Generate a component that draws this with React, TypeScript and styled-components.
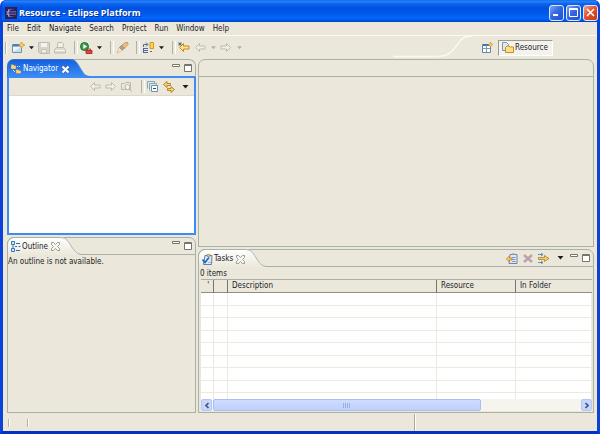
import React from "react";
import styled, { createGlobalStyle, css } from "styled-components";

const face = "#ebe8db";
const edge = "#a9b0a6";
const ink = "#1c1c28";
const focus = "#3b8cf6";

const Page = createGlobalStyle`
  * { box-sizing: border-box; }
  body { margin: 0; background: #fff; font: 8px/12px "DejaVu Sans Condensed", "DejaVu Sans", sans-serif; color: ${ink}; }
  button { font: inherit; color: inherit; padding: 0; border: 0; background: none; }
  svg { display: block; flex: none; }
`;

const Frame = styled.div`
  min-height: 100vh;
  display: flex;
  flex-direction: column;
  border: 3px solid #0a42dc;
  border-top: 0;
  border-bottom-color: #0530c4;
  border-radius: 6px 6px 0 0;
  background: #0a42dc;
`;
const TitleBar = styled.header`
  display: flex;
  align-items: center;
  height: 22px;
  gap: 2px;
  padding: 3px 0 0 3px;
  margin: 0 -1px;
  border-radius: 5px 5px 0 0;
  background: linear-gradient(#0a5be8 0, #2b86fa 1px, #0a62ee 4px, #0052e0 8px, #0058e8 13px, #0268fc 18px, #0058ea 20px, #0340c4 22px);
`;
const Title = styled.h1`
  flex: 1;
  margin: 0;
  color: #fff;
  font: bold 9px/14px "Open Sans", sans-serif;
  text-shadow: 1px 1px 0 #0a2f96;
`;
const CaptionButton = styled.button<{ $close?: boolean }>`
  display: grid;
  place-items: center;
  width: 15px;
  height: 16px;
  border: 1px solid #dfe9fb;
  border-radius: 3px;
  background: ${(p) =>
    p.$close
      ? "linear-gradient(135deg, #f0a087, #e2532c 45%, #c93a12)"
      : "linear-gradient(135deg, #7fa5f5, #3668e4 45%, #1c4fd8)"};
`;
const Client = styled.div`
  flex: 1;
  display: flex;
  flex-direction: column;
  background: ${face};
`;
const MenuBar = styled.nav`
  display: flex;
  gap: 8px;
  height: 14px;
  padding: 0 4px;
  border-bottom: 1px solid #fbfaf5;
`;
const MenuItem = styled.button`
  line-height: 13px;
`;
const ToolRow = styled.div`
  display: flex;
  align-items: stretch;
  height: 23px;
`;
const ToolBar = styled.div`
  display: flex;
  align-items: center;
  flex: 1;
  padding-left: 2px;
`;
const IconButton = styled.button<{ $w?: number }>`
  display: grid;
  place-items: center;
  flex: none;
  width: ${(p) => p.$w ?? 16}px;
  height: 16px;
`;
const Grip = styled.span`
  width: 5px;
  height: 12px;
  border-left: 1px solid #b4b1a3;
  box-shadow: inset 1px 0 #fff;
`;
const Separator = styled.span`
  width: 10px;
  height: 13px;
  padding-left: 6px;
  &::before {
    content: "";
    display: block;
    width: 2px;
    height: 100%;
    border-left: 1px solid #b4b1a3;
    border-right: 1px solid #fff;
  }
`;
const Perspectives = styled.div`
  display: flex;
  align-items: center;
  gap: 3px;
  padding-right: 44px;
`;
const PerspectiveCurve = styled.svg`
  align-self: flex-start;
  margin-top: -1px;
  margin-right: 3px;
`;
const Perspective = styled.button`
  display: flex;
  align-items: center;
  gap: 1px;
  width: 55px;
  height: 16px;
  padding: 0 3px;
  border: 1px solid #9c9a8f;
  border-right-color: #fff;
  border-bottom-color: #fff;
  background: #f4f2ec;
  white-space: nowrap;
`;
const Workbench = styled.main`
  flex: 1;
  display: grid;
  grid-template-columns: 189fr 396fr;
  gap: 2px;
  padding: 0 3px 0 4px;
`;
const Column = styled.div`
  display: flex;
  flex-direction: column;
  gap: 2px;
  min-width: 0;
`;
const Pane = styled.section<{ $grow: number }>`
  flex: ${(p) => p.$grow} 1 0;
  display: flex;
  flex-direction: column;
  min-height: 0;
`;
const PaneHead = styled.div<{ $active?: boolean }>`
  display: flex;
  flex: none;
  height: 18px;
  border: 1px solid ${edge};
  border-radius: 7px 7px 0 0;
  border-bottom-color: ${(p) => (p.$active ? focus : edge)};
`;
const Tab = styled.h2<{ $active?: boolean }>`
  display: flex;
  align-items: center;
  gap: 1px;
  height: 18px;
  margin: -1px 0 -1px -1px;
  padding: 1px 0 0 3px;
  font: inherit;
  border-top: 1px solid ${edge};
  border-left: 1px solid ${edge};
  border-radius: 7px 0 0 0;
  background: linear-gradient(#fff, ${face});
  ${(p) =>
    p.$active &&
    css`
      color: #fff;
      border-color: #2f6fd8;
      background: linear-gradient(#1560de, ${focus});
    `}
`;
const TabName = styled.span`
  padding-right: 2px;
`;
const CurveArt = styled.svg`
  margin: -1px 0;
`;
const HeadTools = styled.div`
  display: flex;
  align-items: center;
  margin-left: auto;
  padding-right: 1px;
`;
const PaneBody = styled.div<{ $active?: boolean }>`
  flex: 1;
  display: flex;
  flex-direction: column;
  min-height: 0;
  border: 1px solid ${edge};
  border-top: 0;
  ${(p) =>
    p.$active &&
    css`
      border: 2px solid ${focus};
      border-top-width: 1px;
    `}
`;
const ViewTools = styled.div`
  display: flex;
  align-items: center;
  justify-content: flex-end;
  height: 18px;
  padding-right: 1px;
  border-bottom: 1px solid #dcd9cb;
`;
const Tree = styled.div`
  flex: 1;
  background: #fff;
`;
const Message = styled.p`
  margin: 0;
  padding: 1px 0 0;
`;
const Count = styled.p`
  margin: 0;
  padding: 1px 1px 0;
  line-height: 11px;
`;
const Grid = styled.div`
  flex: 1;
  display: flex;
  flex-direction: column;
  min-height: 0;
  margin: 0 1px 1px 2px;
  border-top: 1px solid ${edge};
  background: #fff;
`;
const GridView = styled.div`
  flex: 1 1 0;
  min-height: 0;
  overflow: hidden;
`;
const Table = styled.table`
  width: 100%;
  table-layout: fixed;
  border-collapse: separate;
  border-spacing: 0;
`;
const Col = styled.col<{ $w?: number }>`
  width: ${(p) => (p.$w ? `${p.$w}px` : "auto")};
`;
const Th = styled.th`
  height: 13px;
  padding: 0 0 0 4px;
  text-align: left;
  font-weight: normal;
  line-height: 12px;
  white-space: nowrap;
  background: ${face};
  border-bottom: 1px solid #8f9077;
  border-right: 1px solid #77776f;
  &:last-child { border-right: 0; }
`;
const Tr = styled.tr`
  height: 12px;
  &:nth-child(odd) { height: 13px; }
`;
const Td = styled.td`
  padding: 0;
  border-right: 1px solid #ece9df;
  border-bottom: 1px solid #ece9df;
`;
const ScrollBar = styled.div`
  display: flex;
  flex: none;
  height: 12px;
  gap: 1px;
  background: #f5f4ef;
`;
const ScrollButton = styled.button`
  display: grid;
  place-items: center;
  width: 11px;
  height: 12px;
  border: 1px solid #b5c8f4;
  border-radius: 2px;
  background: #c8d6fb;
`;
const Track = styled.div`
  flex: 1;
`;
const Thumb = styled.div`
  display: grid;
  place-items: center;
  width: 73%;
  height: 12px;
  border: 1px solid #aabdf0;
  border-radius: 2px;
  background: linear-gradient(#cfdcff, #bfd0fb);
`;
const StatusBar = styled.footer`
  display: grid;
  grid-template-columns: 411fr 183fr;
  height: 18px;
  padding-top: 1px;
`;
const StatusCell = styled.div`
  display: flex;
  align-items: center;
  gap: 14px;
  padding-left: 5px;
  & + & { border-left: 1px solid #aaa799; box-shadow: inset 1px 0 #fff; }
`;
const StatusMark = styled.span`
  width: 5px;
  height: 8px;
  border-left: 1px solid #b4b1a3;
  box-shadow: inset 1px 0 #fff;
`;

const Down = ({ c = ink, s = 5 }: { c?: string; s?: number }) => (
  <svg width={s} height="4" viewBox="0 0 6 4"><path d="M0 0h6L3 3.6z" fill={c} /></svg>
);
const Arrow = ({ flip, star }: { flip?: boolean; star?: boolean }) => (
  <svg width="12" height="11" viewBox="0 0 12 11">
    <path
      d={flip ? "M10.5 5.5 6.500 1.500v2.500H1v3h5.500v2.500z" : "M1.500 5.500 5.500 1.500v2.500H11v3H5.500v2.500z"}
      fill={star ? "#ffe38a" : "#f1efe8"}
      stroke={star ? "#c18a1b" : "#bdbbb0"}
    />
    {star && <path d="M2 0v4M0 2h4M.6.6l2.8 2.8M3.4.6.6 3.4" stroke="#4d5d80" strokeWidth=".7" />}
  </svg>
);
const Save = () => (
  <svg width="12" height="12" viewBox="0 0 12 12">
    <path d="M.5.5h11v11H2l-1.500-1.500z" fill="#d6d4cc" stroke="#bdbbb2" />
    <path d="M3 1h6v4H3z" fill="#f4f3ee" /><path d="M3.500 7.500h5V11h-5z" fill="#efeee8" stroke="#c3c1b8" />
  </svg>
);
const Print = () => (
  <svg width="12" height="12" viewBox="0 0 12 12">
    <path d="m3 6 1-5.500h4l1.500 1.500-.5 4" fill="#f2f0ea" stroke="#c0beb5" />
    <path d="m.5 8 2-2.500h7l2 2.500v3H.5z" fill="#dedcd4" stroke="#bdbbb2" /><path d="M1 8.500h10" stroke="#f6f5f0" />
  </svg>
);
const NewIcon = () => (
  <svg width="13" height="12" viewBox="0 0 13 12">
    <path d="M.5 2.500h9v8h-9z" fill="#eef6fc" stroke="#7090b4" /><path d="M1 3.500h8" stroke="#3f79bd" strokeWidth="2" />
    <path d="M1 10 9 5v5z" fill="#c5def0" />
    <path d="M9.500 0 11 2l2 1-2 1-1.500 2L8 4 6.500 3 8 2z" fill="#f3cd58" stroke="#b38322" strokeWidth=".5" />
  </svg>
);
const Run = () => (
  <svg width="13" height="12" viewBox="0 0 13 12">
    <circle cx="4.500" cy="4.500" r="4" fill="#3c9b48" stroke="#19722c" /><path d="M3.300 2v5L7 4.500z" fill="#fff" />
    <path d="M6 8.500h6v3H6z" fill="#d8453e" stroke="#b5302c" /><path d="M7.500 8V7h3v1" fill="none" stroke="#b5302c" />
  </svg>
);
const Torch = () => (
  <svg width="13" height="12" viewBox="0 0 13 12">
    <path d="m1 11 2.500-5.500L6.500 8z" fill="#fff3bd" stroke="#d6ae69" strokeWidth=".7" />
    <path d="M3.500 5.500 5.500 3.500l3 2.500-2 2z" fill="#a9a9ac" stroke="#6f7482" strokeWidth=".7" />
    <path d="M5.500 3.500 9.500.5h2l.5 2L8.500 6z" fill="#f0bd83" stroke="#b67f47" strokeWidth=".7" />
  </svg>
);
const OpenType = () => (
  <svg width="13" height="13" viewBox="0 0 13 13">
    <path d="M1 7.500h5M1 9.500h5M1 11.500h5M1.500 7v5" stroke="#476ca7" />
    <path d="M1.500 6V3.500h4M4 1.500l2 2-2 2" fill="none" stroke="#476ca7" />
    <path d="M8 1.500h3.500v6H8z" fill="#ffd34a" stroke="#d29a20" /><path d="M8 10.500h2" stroke="#476ca7" />
  </svg>
);
const NavigatorIcon = () => (
  <svg width="11" height="10" viewBox="0 0 11 10">
    <path d="M2.500 4v3.500h3M6 2.500h3" fill="none" stroke="#cfe2ff" strokeDasharray="1 1" />
    <path d="M0 .5h2l1 1h2V5H0zM5 5.500h2l1 1h2V9.500H5z" fill="#f8d57c" stroke="#94733a" strokeWidth=".4" />
  </svg>
);
const OutlineIcon = () => (
  <svg width="10" height="11" viewBox="0 0 10 11">
    <path d="M.5.5h3v3h-3zM.5 7.500h3v3h-3z" fill="#d8ebfb" stroke="#2b79c9" />
    <path d="M5 2.500h4M5 9.500h4M4 5.500h2M7.500 5.500h2M2 4v3" stroke="#2f6eae" />
  </svg>
);
const TasksIcon = () => (
  <svg width="11" height="11" viewBox="0 0 11 11">
    <path d="M3 1.500h7l-.5 9h-8z" fill="#dce9f8" stroke="#6280a9" /><path d="M5 .5h3v2H5z" fill="#edc46a" stroke="#917039" strokeWidth=".5" />
    <path d="m.5 5.500 2.500 3 4-5" fill="none" stroke="#1d62bd" strokeWidth="1.600" /><path d="M6 8.500h3" stroke="#a4b9d6" />
  </svg>
);
const Close = ({ active }: { active?: boolean }) =>
  active ? (
    <svg width="9" height="9" viewBox="0 0 9 9">
      <path d="m1.500 1.500 6 6M7.500 1.500l-6 6" stroke="#3d5f93" strokeWidth="3.400" /><path d="m1.500 1.500 6 6M7.500 1.500l-6 6" stroke="#fff" strokeWidth="2.200" />
    </svg>
  ) : (
    <svg width="9" height="9" viewBox="0 0 9 9">
      <path d="M.5.5h2l2 2 2-2h2v2l-2 2 2 2v2h-2l-2-2-2 2h-2v-2l2-2-2-2z" fill="#f7f6f0" stroke="#85877e" strokeWidth=".8" />
    </svg>
  );
const MinBox = () => (
  <svg width="8" height="9" viewBox="0 0 8 9"><path d="M.5.5h7v2h-7z" fill="#fff" stroke="#74766d" /></svg>
);
const MaxBox = () => (
  <svg width="8" height="8" viewBox="0 0 8 8"><path d="M.5.5h7v7h-7z" fill="#fff" stroke="#74766d" /><path d="M1 1.500h6" stroke="#74766d" /></svg>
);
const UpFolder = () => (
  <svg width="12" height="11" viewBox="0 0 12 11">
    <path d="M.5 2.500h3l1-1h5v7h-9z" fill="#e9e7df" stroke="#bcbab0" /><circle cx="6.500" cy="6" r="2.500" fill="#f4f3ed" stroke="#b5b3aa" /><path d="m8.500 8 2 2.500" stroke="#b5b3aa" />
  </svg>
);
const Collapse = () => (
  <svg width="12" height="12" viewBox="0 0 12 12">
    <path d="M.5 7.500v-7h7v2M2.500 9.500v-7h7v2" fill="none" stroke="#83a7bf" /><path d="M4.500 4.500h6v6h-6z" fill="#fff" stroke="#6490b3" /><path d="M6 7.500h3" stroke="#1d4e8e" />
  </svg>
);
const Link = () => (
  <svg width="12" height="12" viewBox="0 0 12 12">
    <path d="M.5 3.500 4 .5v2h3.500v2H4v2zM11.500 8.500 8 5.500v2H4.500v2H8v2z" fill="#f8d27b" stroke="#b77b1c" strokeWidth=".9" />
  </svg>
);
const NewTask = () => (
  <svg width="12" height="11" viewBox="0 0 12 11">
    <path d="M4 1.500h7v9H3z" fill="#dae8f8" stroke="#6c87ae" /><path d="M6 4.500h3.500M6 6.500h3.500M6 8.500h3.500" stroke="#7d99c0" /><path d="M6 .5h3v1.500H6z" fill="#9c9a90" />
    <path d="m.3 6 3.200-3v2H6v2H3.500v2z" fill="#f6cb67" stroke="#b17a1c" strokeWidth=".7" />
  </svg>
);
const Delete = () => (
  <svg width="10" height="9" viewBox="0 0 10 9"><path d="m1 1 8 7M9 1 1 8" stroke="#b9a4ae" strokeWidth="2.400" /></svg>
);
const Filter = () => (
  <svg width="12" height="11" viewBox="0 0 12 11">
    <path d="M0 1.500h5M0 9.500h5M3 0l2 1.500L3 3M3 8l2 1.500L3 11" fill="none" stroke="#5b87a4" strokeWidth=".9" />
    <path d="M.5 4.500h6v-2l4.500 3-4.500 3v-2h-6z" fill="#f7cf6d" stroke="#ad7e23" strokeWidth=".8" />
  </svg>
);
const OpenPerspective = () => (
  <svg width="11" height="11" viewBox="0 0 11 11">
    <path d="M.5 2.500h8v8h-8z" fill="#fff" stroke="#66829c" /><path d="M1 3h7" stroke="#3974b6" strokeWidth="2" /><path d="M4.500 3v7M1 6.500h7" stroke="#7e9bb0" />
    <path d="m8.500 0 1 1.500L11 2.500 9.500 3.500l-1 1.500-1-1.500L6 2.500l1.500-1z" fill="#f2ca58" stroke="#a87d25" strokeWidth=".4" />
  </svg>
);
const ResourceIcon = () => (
  <svg width="12" height="12" viewBox="0 0 12 12">
    <path d="M.5.5h4l2 2v6h-6z" fill="#dde6f1" stroke="#8494ab" /><path d="M3.500 5.500 5 4h2l1 1h3.500v5.500h-8z" fill="#ffdf82" stroke="#c18e2b" />
  </svg>
);
const EclipseMark = () => (
  <svg width="12" height="12" viewBox="0 0 12 12">
    <path d="M0 0h12v12H0z" fill="#2a1e5c" /><circle cx="6.500" cy="6" r="4.300" fill="#6a60a6" /><circle cx="7.500" cy="6" r="3.500" fill="#241950" />
    <path d="M1 4.500h10M1 6h10M1 7.500h10" stroke="#8d86bd" strokeWidth=".6" /><path d="M4 2Q1.500 6 4 10" fill="none" stroke="#bdb6de" strokeWidth=".8" />
  </svg>
);
const TabCurve = ({ active, w }: { active?: boolean; w: number }) => (
  <CurveArt width={w} height="18" viewBox="0 0 26 18" preserveAspectRatio="none">
    <defs>
      <linearGradient id={active ? "tabOn" : "tabOff"} x2="0" y2="1">
        <stop stopColor={active ? "#1560de" : "#fff"} /><stop offset="1" stopColor={active ? focus : face} />
      </linearGradient>
    </defs>
    <path d="M0 0C8 0 10 5 14 10S20 17 26 18H0z" fill={`url(#${active ? "tabOn" : "tabOff"})`} />
    <path d="M0 .5C8 .5 10 5 14 10S20 17 26 17.500" fill="none" stroke={active ? "#4f86d6" : edge} />
  </CurveArt>
);
const PaneControls = ({ name }: { name: string }) => (
  <>
    <IconButton $w={12} aria-label={`Minimize ${name}`}><MinBox /></IconButton>
    <IconButton $w={12} aria-label={`Maximize ${name}`}><MaxBox /></IconButton>
  </>
);
const Drop = ({ label, off }: { label: string; off?: boolean }) => (
  <IconButton $w={10} aria-label={label}><Down c={off ? "#b3b1a7" : ink} /></IconButton>
);

const menus = ["File", "Edit", "Navigate", "Search", "Project", "Run", "Window", "Help"];
const columns = ["Description", "Resource", "In Folder"];

export default function App() {
  return (
    <>
      <Page />
      <Frame>
        <TitleBar>
          <EclipseMark />
          <Title>Resource - Eclipse Platform</Title>
          <CaptionButton aria-label="Minimize"><svg width="9" height="9"><path d="M1 7h5" stroke="#fff" strokeWidth="2" /></svg></CaptionButton>
          <CaptionButton aria-label="Maximize"><svg width="9" height="9"><path d="M.5.5h8v8h-8zM1 1.500h7" fill="none" stroke="#fff" /></svg></CaptionButton>
          <CaptionButton $close aria-label="Close"><svg width="9" height="9"><path d="m1 1 7 7M8 1 1 8" stroke="#fff" strokeWidth="1.500" /></svg></CaptionButton>
        </TitleBar>
        <Client>
          <MenuBar>{menus.map((m) => <MenuItem key={m}>{m}</MenuItem>)}</MenuBar>
          <ToolRow>
            <ToolBar role="toolbar" aria-label="Main">
              <Grip />
              <IconButton aria-label="New"><NewIcon /></IconButton>
              <Drop label="New options" />
              <IconButton disabled aria-label="Save"><Save /></IconButton>
              <IconButton disabled aria-label="Print"><Print /></IconButton>
              <Separator />
              <IconButton aria-label="External tools"><Run /></IconButton>
              <Drop label="External tools options" />
              <Separator />
              <IconButton aria-label="Search"><Torch /></IconButton>
              <Separator />
              <IconButton aria-label="Next annotation"><OpenType /></IconButton>
              <Drop label="Annotation options" />
              <Separator />
              <IconButton aria-label="Last edit location"><Arrow star /></IconButton>
              <IconButton aria-label="Back"><Arrow /></IconButton>
              <Drop off label="Back history" />
              <IconButton aria-label="Forward"><Arrow flip /></IconButton>
              <Drop off label="Forward history" />
            </ToolBar>
            <Perspectives>
              <PerspectiveCurve width="80" height="23" viewBox="0 0 80 23">
                <path d="M80 1C66 1 66 9 60 15S52 21.500 38 21.500H0" fill="none" stroke="#faf9f4" strokeWidth="1.500" />
              </PerspectiveCurve>
              <IconButton aria-label="Open perspective"><OpenPerspective /></IconButton>
              <Perspective aria-pressed="true"><ResourceIcon />Resource</Perspective>
            </Perspectives>
          </ToolRow>
          <Workbench>
            <Column>
              <Pane $grow={176}>
                <PaneHead $active>
                  <Tab $active><NavigatorIcon /><TabName>Navigator</TabName><Close active /></Tab>
                  <TabCurve active w={20} />
                  <HeadTools><PaneControls name="Navigator" /></HeadTools>
                </PaneHead>
                <PaneBody $active>
                  <ViewTools>
                    <IconButton aria-label="Back"><Arrow /></IconButton>
                    <IconButton aria-label="Forward"><Arrow flip /></IconButton>
                    <IconButton aria-label="Up"><UpFolder /></IconButton>
                    <Separator />
                    <IconButton aria-label="Collapse all"><Collapse /></IconButton>
                    <IconButton aria-label="Link with editor"><Link /></IconButton>
                    <IconButton aria-label="View menu"><Down s={7} /></IconButton>
                  </ViewTools>
                  <Tree />
                </PaneBody>
              </Pane>
              <Pane $grow={177}>
                <PaneHead>
                  <Tab><OutlineIcon /><TabName>Outline</TabName><Close /></Tab>
                  <TabCurve w={22} />
                  <HeadTools><PaneControls name="Outline" /></HeadTools>
                </PaneHead>
                <PaneBody><Message>An outline is not available.</Message></PaneBody>
              </Pane>
            </Column>
            <Column>
              <Pane $grow={189} aria-label="Editor area"><PaneHead /><PaneBody /></Pane>
              <Pane $grow={164}>
                <PaneHead>
                  <Tab><TasksIcon /><TabName>Tasks</TabName><Close /></Tab>
                  <TabCurve w={22} />
                  <HeadTools>
                    <IconButton aria-label="Add task"><NewTask /></IconButton>
                    <IconButton aria-label="Delete"><Delete /></IconButton>
                    <IconButton aria-label="Filter"><Filter /></IconButton>
                    <IconButton aria-label="View menu"><Down s={7} /></IconButton>
                    <PaneControls name="Tasks" />
                  </HeadTools>
                </PaneHead>
                <PaneBody>
                  <Count>0 items</Count>
                  <Grid>
                    <GridView>
                      <Table>
                        <colgroup><Col $w={13} /><Col $w={14} /><Col /><Col $w={79} /><Col $w={76} /></colgroup>
                        <thead>
                          <tr>
                            <Th aria-label="Completed">&nbsp;'</Th>
                            <Th aria-label="Priority" />
                            {columns.map((c) => <Th key={c}>{c}</Th>)}
                          </tr>
                        </thead>
                        <tbody>
                          {Array.from({ length: 9 }, (_, r) => (
                            <Tr key={r}>{Array.from({ length: 5 }, (_, c) => <Td key={c} />)}</Tr>
                          ))}
                        </tbody>
                      </Table>
                    </GridView>
                    <ScrollBar>
                      <ScrollButton aria-label="Scroll left"><svg width="6" height="7"><path d="M4.500 1 2 3.500 4.500 6" fill="none" stroke="#3f5785" strokeWidth="1.700" /></svg></ScrollButton>
                      <Track>
                        <Thumb><svg width="8" height="5"><path d="M.5 0v5M2.500 0v5M4.500 0v5M6.500 0v5" stroke="#98b0e8" /></svg></Thumb>
                      </Track>
                      <ScrollButton aria-label="Scroll right"><svg width="6" height="7"><path d="M1.500 1 4 3.500 1.500 6" fill="none" stroke="#3f5785" strokeWidth="1.700" /></svg></ScrollButton>
                    </ScrollBar>
                  </Grid>
                </PaneBody>
              </Pane>
            </Column>
          </Workbench>
          <StatusBar>
            <StatusCell><StatusMark /><StatusMark /></StatusCell>
            <StatusCell />
          </StatusBar>
        </Client>
      </Frame>
    </>
  );
}
